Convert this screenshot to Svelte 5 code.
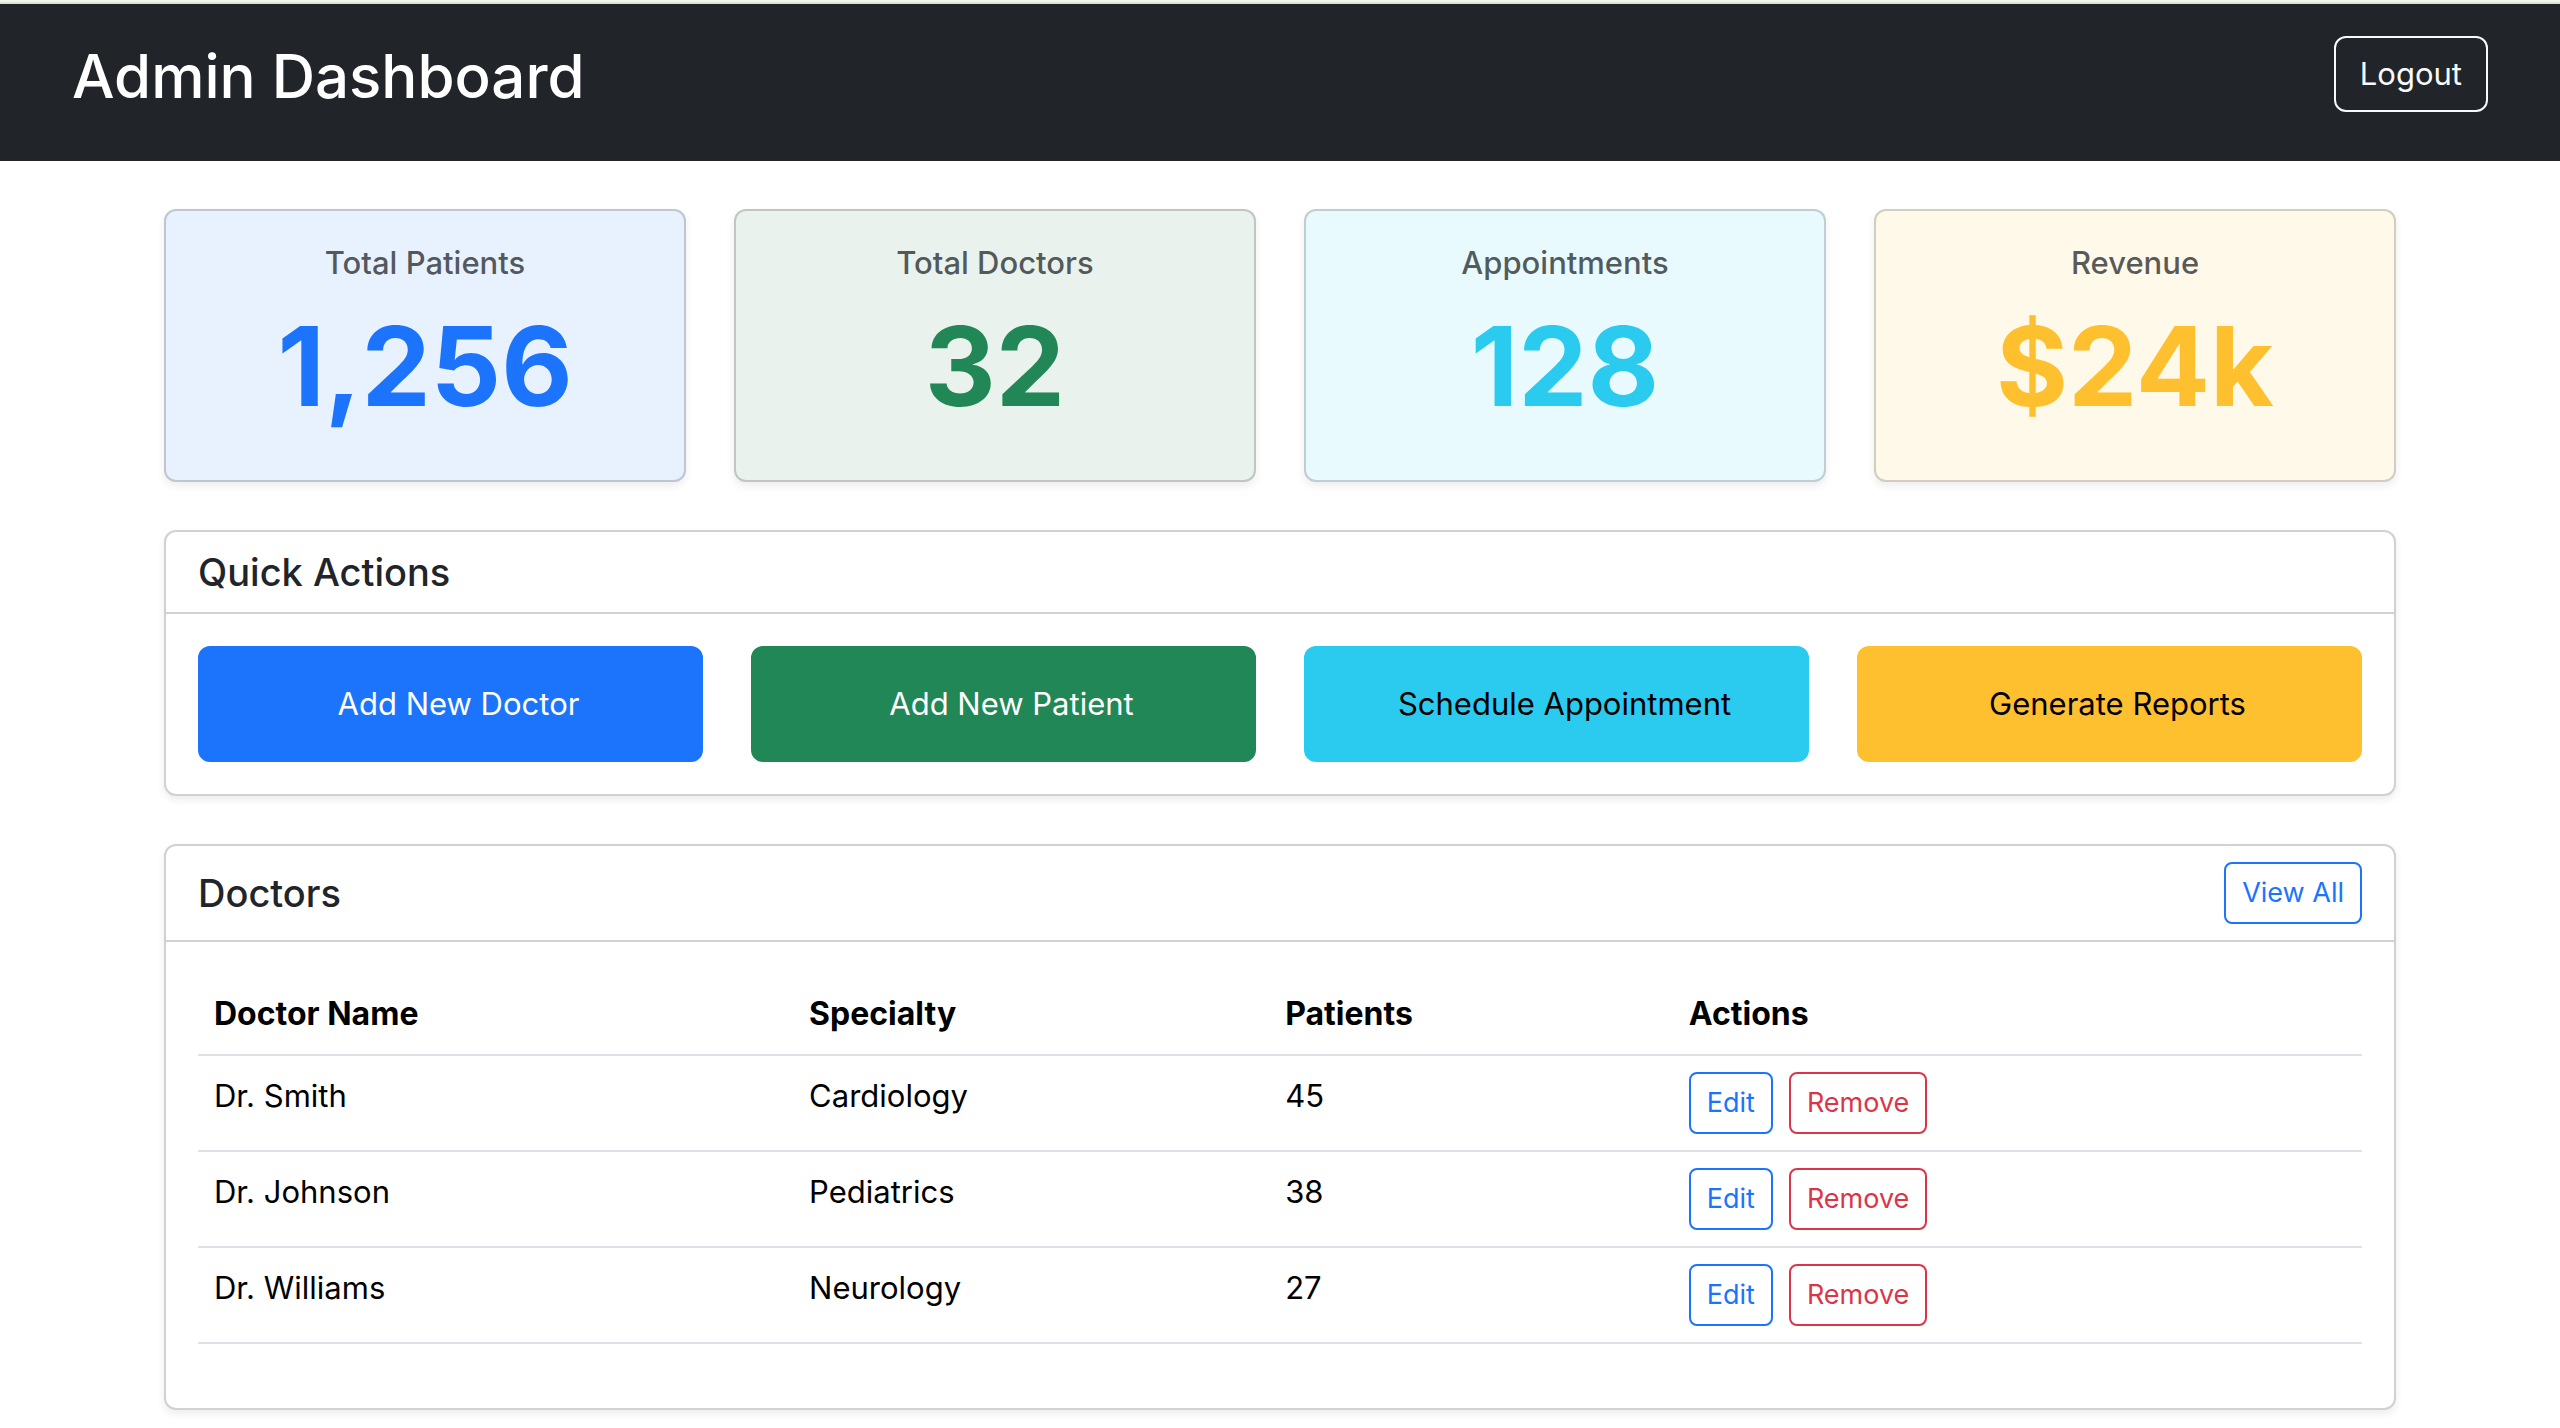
<script>
  const stats = [
    { label: 'Total Patients', value: '1,256', tone: 'primary' },
    { label: 'Total Doctors', value: '32', tone: 'success' },
    { label: 'Appointments', value: '128', tone: 'info' },
    { label: 'Revenue', value: '$24k', tone: 'warning' }
  ];

  const actions = [
    { label: 'Add New Doctor', tone: 'primary' },
    { label: 'Add New Patient', tone: 'success' },
    { label: 'Schedule Appointment', tone: 'info' },
    { label: 'Generate Reports', tone: 'warning' }
  ];

  const doctors = [
    { name: 'Dr. Smith', specialty: 'Cardiology', patients: 45 },
    { name: 'Dr. Johnson', specialty: 'Pediatrics', patients: 38 },
    { name: 'Dr. Williams', specialty: 'Neurology', patients: 27 }
  ];
</script>

<header class="topbar">
  <h1>Admin Dashboard</h1>
  <button type="button" class="btn outline-light">Logout</button>
</header>

<main>
  <section class="stats" aria-label="Statistics">
    {#each stats as stat}
      <div class="card stat {stat.tone}">
        <h2>{stat.label}</h2>
        <p>{stat.value}</p>
      </div>
    {/each}
  </section>

  <section class="card">
    <div class="card-header"><h2>Quick Actions</h2></div>
    <div class="card-body actions">
      {#each actions as action}
        <button type="button" class="btn solid {action.tone}">{action.label}</button>
      {/each}
    </div>
  </section>

  <section class="card">
    <div class="card-header">
      <h2>Doctors</h2>
      <button type="button" class="btn small outline-primary">View All</button>
    </div>
    <div class="card-body">
      <table>
        <thead>
          <tr>
            <th class="col-name" scope="col">Doctor Name</th>
            <th class="col-specialty" scope="col">Specialty</th>
            <th class="col-patients" scope="col">Patients</th>
            <th scope="col">Actions</th>
          </tr>
        </thead>
        <tbody>
          {#each doctors as doctor}
            <tr>
              <td>{doctor.name}</td>
              <td>{doctor.specialty}</td>
              <td>{doctor.patients}</td>
              <td>
                <div class="row-actions">
                  <button type="button" class="btn small outline-primary">Edit</button>
                  <button type="button" class="btn small outline-danger">Remove</button>
                </div>
              </td>
            </tr>
          {/each}
        </tbody>
      </table>
    </div>
  </section>
</main>

<style>
  :global(body) {
    margin: 0;
    background: #fff;
    color: #212529;
    font-family: Inter, 'Liberation Sans', sans-serif;
    font-size: 31px;
    line-height: 48px;
    border-top: 2px solid #f0f8ea;
  }

  h1,
  h2,
  p {
    margin: 0;
    font-weight: 500;
  }

  .topbar {
    display: flex;
    justify-content: space-between;
    align-items: flex-start;
    padding: 32px 72px 45px;
    background: #212529;
    color: #fff;
    border-top: 2px solid #dce3d8;
  }

  .topbar h1 {
    font-size: 60px;
    line-height: 80px;
  }

  main {
    display: flex;
    flex-direction: column;
    gap: 48px;
    max-width: 2232px;
    margin: 0 auto;
    padding: 48px 24px 18px;
  }

  .card {
    background: #fff;
    border: 2px solid #d1d1d1;
    border-radius: 12px;
    box-shadow: 0 4px 8px rgba(0, 0, 0, 0.075);
  }

  .stats {
    display: grid;
    grid-template-columns: repeat(4, 1fr);
    gap: 48px;
  }

  .stat {
    padding: 32px 32px 46px;
    text-align: center;
    border-color: rgba(0, 0, 0, 0.175);
  }

  .stat h2 {
    font-size: 31px;
    line-height: 40px;
    margin-bottom: 16px;
    color: rgba(33, 37, 41, 0.75);
  }

  .stat p {
    font-size: 110px;
    line-height: 135px;
    font-weight: 700;
  }

  .stat.primary { background-color: #e8f1fe; }
  .stat.success { background-color: #e9f2ed; }
  .stat.info { background-color: #e8fafe; }
  .stat.warning { background-color: #fff9e9; }
  .stat.primary p { color: #1b74fb; }
  .stat.success p { color: #218756; }
  .stat.info p { color: #2acbef; }
  .stat.warning p { color: #ffc02f; }

  .card-header {
    display: flex;
    justify-content: space-between;
    align-items: center;
    padding: 16px 32px;
    border-bottom: 2px solid #d1d1d1;
  }

  .card-header h2 {
    font-size: 38px;
    line-height: 48px;
  }

  .card-body {
    padding: 32px;
  }

  .actions {
    display: grid;
    grid-template-columns: repeat(4, 1fr);
    gap: 48px;
  }

  .btn {
    box-sizing: border-box;
    padding: 12px 24px;
    border: 2px solid transparent;
    border-radius: 12px;
    background: transparent;
    font: inherit;
    cursor: pointer;
  }

  .btn.small {
    padding: 8px 16px;
    border-radius: 8px;
    font-size: 27px;
    line-height: 42px;
  }

  .btn.solid { padding: 32px 16px 32px 32px; }
  .btn.solid.primary { background: #1b74fb; border-color: #1b74fb; color: #fff; }
  .btn.solid.success { background: #218756; border-color: #218756; color: #fff; }
  .btn.solid.info { background: #2acbef; border-color: #2acbef; color: #000; }
  .btn.solid.warning { background: #ffc02f; border-color: #ffc02f; color: #000; }

  .outline-light { border-color: #f8f9fa; color: #f8f9fa; }
  .outline-primary { border-color: #1b74fb; color: #1b74fb; }
  .outline-danger { border-color: #dc3547; color: #dc3547; }

  table {
    width: 100%;
    margin-bottom: 32px;
    border-collapse: separate;
    border-spacing: 0;
    table-layout: fixed;
    color: #000;
  }

  th,
  td {
    box-sizing: border-box;
    padding: 16px;
    border-bottom: 2px solid #dee2e6;
    text-align: left;
    vertical-align: top;
  }

  th {
    font-size: 32px;
    font-weight: 700;
  }

  .col-name { width: 27.5%; }
  .col-specialty { width: 22%; }
  .col-patients { width: 18.65%; }

  .row-actions {
    display: flex;
    gap: 16px;
  }
</style>
